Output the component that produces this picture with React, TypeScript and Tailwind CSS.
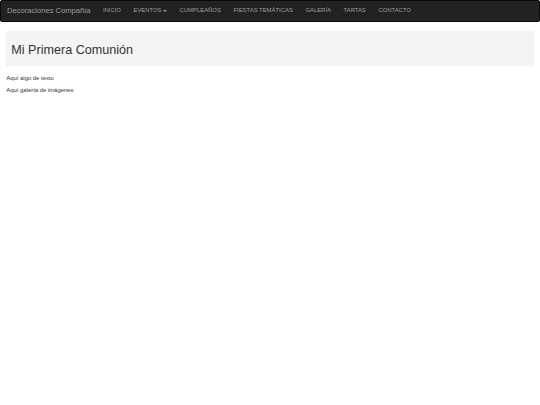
import React from 'react';

const links = ['INICIO', 'EVENTOS', 'CUMPLEAÑOS', 'FIESTAS TEMÁTICAS', 'GALERÍA', 'TARTAS', 'CONTACTO'];

export default function App() {
  return (
    <div className="min-h-[405px] bg-white text-[#333] font-['Liberation_Sans',Arial,sans-serif]">
      <nav className="h-[22px] bg-[#222] border border-[#080808] rounded-[2px] flex items-center px-[6px]">
        <span className="text-[7.6px] text-[#9d9d9d] leading-none">Decoraciones Compañía</span>
        <ul className="flex items-center ms-[6px]">
          {links.map((l) => (
            <li key={l} className="px-[6.3px] text-[5.9px] leading-none text-[#9d9d9d] flex items-center">
              {l}
              {l === 'EVENTOS' ? (
                <span className="ms-[1.5px] inline-block w-0 h-0 border-x-[2px] border-x-transparent border-t-[2px] border-t-[#9d9d9d]" />
              ) : null}
            </li>
          ))}
        </ul>
      </nav>

      <div className="px-[6.3px]">
        <div className="mt-[8.5px] h-[35px] bg-[#f4f4f4] rounded-[2px] flex items-center pt-[5px] px-[5px] shadow-[0_0_1px_rgba(0,0,0,0.08)]">
          <h1 className="text-[12.6px] leading-none text-[#333]">Mi Primera Comunión</h1>
        </div>
        <div className="mt-[8px] text-[5.9px] leading-[8.4px]">
          <p className="mb-[4.2px]">Aquí algo de texto</p>
          <p className="mb-[4.2px]">Aquí galería de imágenes</p>
        </div>
      </div>
    </div>
  );
}
